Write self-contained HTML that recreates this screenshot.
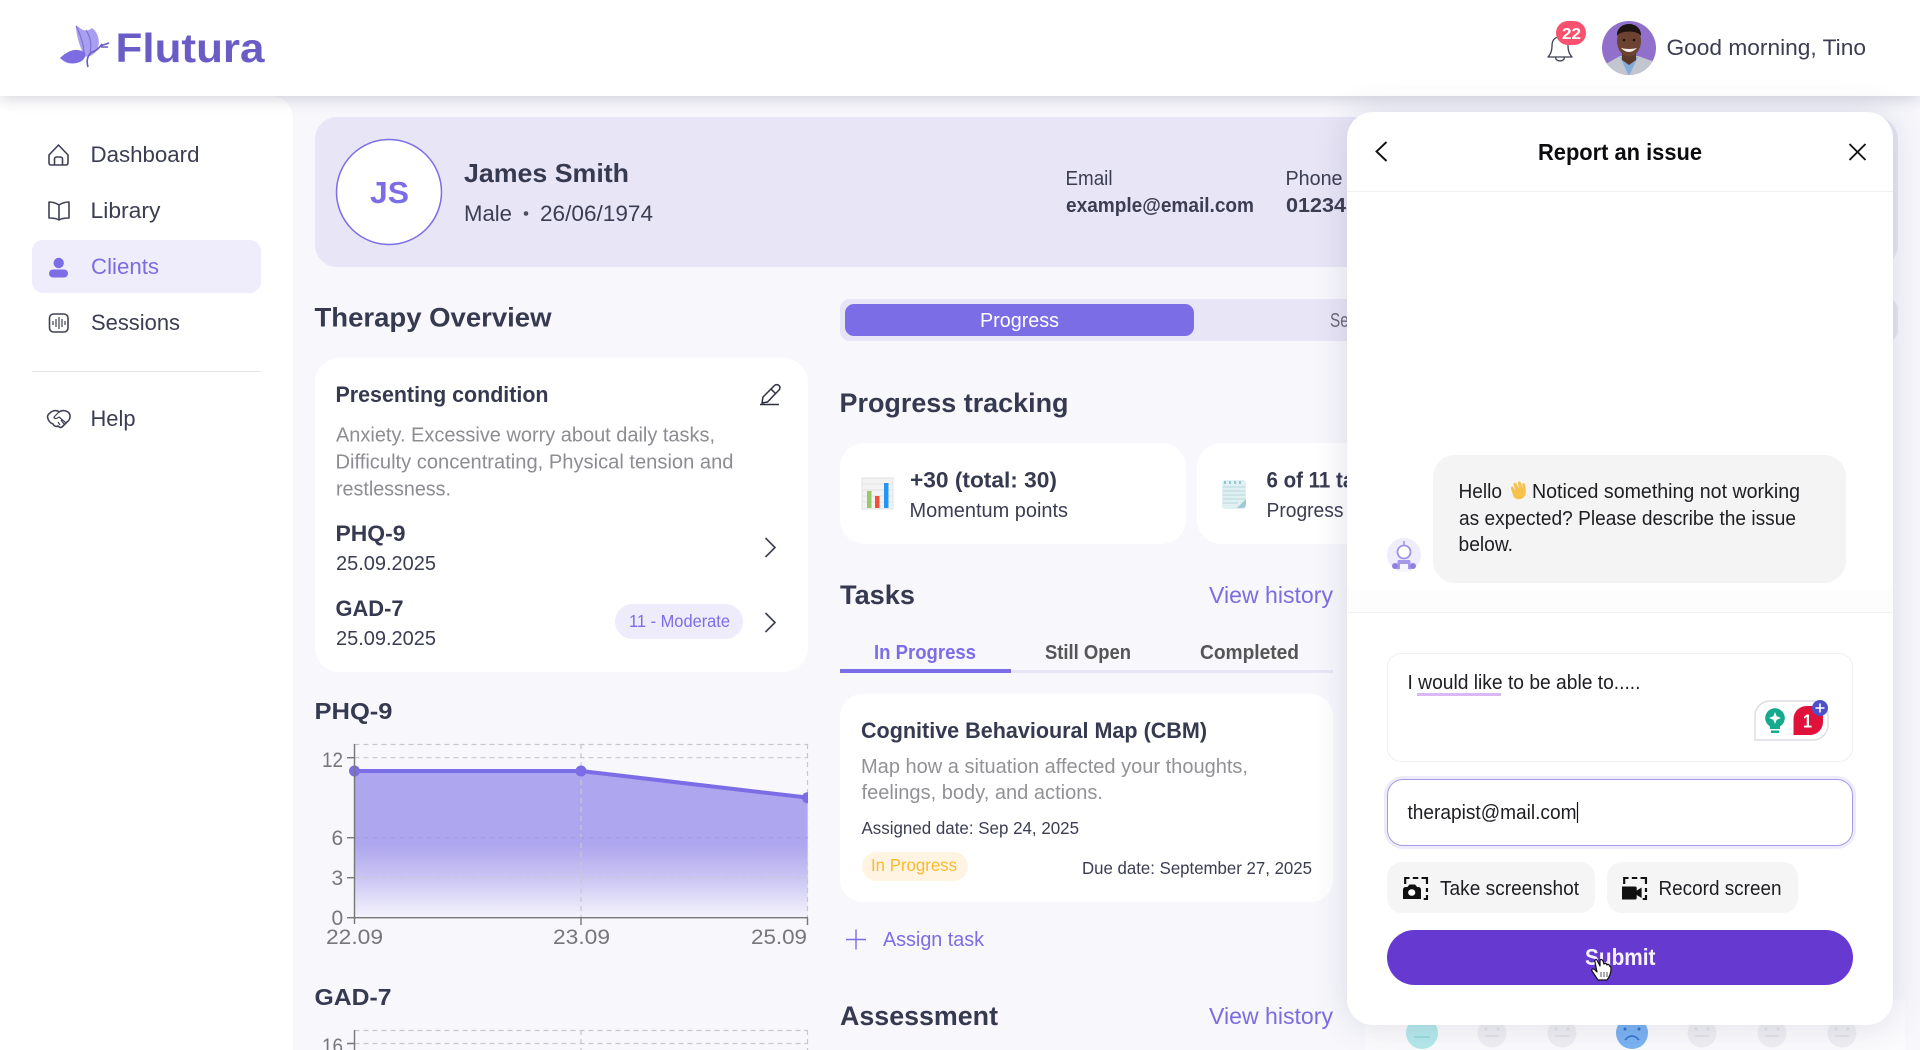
<!DOCTYPE html>
<html lang="en"><head><meta charset="utf-8"><title>Flutura</title>
<style>
html,body{margin:0;padding:0;width:1920px;height:1050px;overflow:hidden;background:#f7f7fc}
#r{position:relative;width:1920px;height:1050px;overflow:hidden;background:#f7f7fc;filter:blur(.35px);font-family:"Liberation Sans",sans-serif}
.b{position:absolute;box-sizing:border-box}
svg{position:absolute;left:0;top:0;overflow:visible}
text{font-family:"Liberation Sans",sans-serif;fill:#3b3d52}
.h{font-weight:700;fill:#363a50}
.g{fill:#8c8c92}
.p{fill:#7b6de0}
</style></head><body><div id="r">
<!-- base surfaces -->
<div class="b" style="left:0;top:96px;width:293px;height:954px;background:#fff;border-top-right-radius:22px"></div>
<div class="b" style="left:32px;top:240px;width:229px;height:53px;background:#efedfb;border-radius:11px"></div>
<div class="b" style="left:32px;top:371px;width:229px;height:1px;background:#e4e4e8"></div>
<div class="b" style="left:315px;top:117px;width:1583px;height:150px;background:#e8e5f6;border-radius:22px"></div>
<div class="b" style="left:840px;top:299px;width:1058px;height:42px;background:#e8e5f6;border-radius:10px"></div>
<div class="b" style="left:845px;top:304px;width:349px;height:32px;background:#7b6de6;border-radius:9px"></div>
<div class="b" style="left:315px;top:358px;width:493px;height:314px;background:#fff;border-radius:24px"></div>
<div class="b" style="left:615px;top:604px;width:128px;height:35px;background:#eeecfb;border-radius:18px"></div>
<div class="b" style="left:840px;top:443px;width:346px;height:101px;background:#fff;border-radius:24px"></div>
<div class="b" style="left:1197px;top:443px;width:346px;height:101px;background:#fff;border-radius:24px"></div>
<div class="b" style="left:840px;top:694px;width:493px;height:208px;background:#fff;border-radius:22px"></div>
<div class="b" style="left:862px;top:852px;width:106px;height:29px;background:#fff4e2;border-radius:15px"></div>
<div class="b" style="left:840px;top:670px;width:493px;height:3px;background:#e8e5f6"></div>
<div class="b" style="left:840px;top:669px;width:171px;height:4px;background:#7b6de6"></div>
<div class="b" style="left:1365px;top:1000px;width:540px;height:50px;background:#fbfbfd"></div>

<svg width="1920" height="1050" viewBox="0 0 1920 1050">
<defs><linearGradient id="ar" x1="0" y1="771" x2="0" y2="918" gradientUnits="userSpaceOnUse">
<stop offset="0" stop-color="#aea6ee"/><stop offset=".5" stop-color="#aea6ee"/><stop offset=".72" stop-color="#c9c4f3"/><stop offset="1" stop-color="#f5f4fc"/></linearGradient></defs>

<!-- sidebar -->
<g fill="none" stroke="#3f4155" stroke-width="1.6" stroke-linejoin="round">
<path d="M49 155L58.5 145 68 155V163a2 2 0 0 1-2 2H51a2 2 0 0 1-2-2Z"/><path d="M54.500 165v-6a2 2 0 0 1 2-2h4a2 2 0 0 1 2 2v6"/>
<path d="M59 205C56 203 52 202 49 202V218C52 218 56 218 59 220 62 218 66 218 69 218V202C66 202 62 203 59 205ZM59 205V220"/>
<rect x="49.500" y="314" width="18.500" height="18" rx="4"/>
<path d="M53 321v4M56 319v8M59 317v12M62 319v8M65 321v4" stroke-width="1.2"/>
<path d="M50 413C53 410 57 410 59 412 62 410 66 410 69 413 71 416 70 420 67 422L62 427C60 428 59 427 58 426 56 427 54 426 53 424 50 423 48 420 47.500 417 47.500 415 48.500 414 50 413Z"/>
<path d="M59 412L54 417C54 419 57 419 59 417L66 423M61 420L64 424M58 422L60 425" stroke-width="1.2"/>
</g>
<circle cx="58.700" cy="263" r="5.200" fill="#7b6de6"/><rect x="49" y="269.500" width="19" height="8" rx="4" fill="#7b6de6"/>
<text x="90.500" y="162" font-size="22" textLength="109" lengthAdjust="spacingAndGlyphs">Dashboard</text>
<text x="90.500" y="218" font-size="22" textLength="70" lengthAdjust="spacingAndGlyphs">Library</text>
<text x="91" y="274" font-size="22" textLength="68" lengthAdjust="spacingAndGlyphs" class="p">Clients</text>
<text x="91" y="330" font-size="22" textLength="89" lengthAdjust="spacingAndGlyphs">Sessions</text>
<text x="90.500" y="426" font-size="22" textLength="45" lengthAdjust="spacingAndGlyphs">Help</text>

<!-- patient card -->
<circle cx="389" cy="192" r="52.500" fill="#fff" stroke="#7b6de6" stroke-width="1.500"/>
<text x="370" y="203" font-size="31" font-weight="700" textLength="39" lengthAdjust="spacingAndGlyphs" style="fill:#7b6de6">JS</text>
<text x="464" y="182" font-size="26" textLength="165" lengthAdjust="spacingAndGlyphs" class="h">James Smith</text>
<text x="464" y="221" font-size="22" textLength="48" lengthAdjust="spacingAndGlyphs">Male</text>
<circle cx="526" cy="213.500" r="2.300" fill="#4a4c60"/>
<text x="540" y="221" font-size="22" textLength="113" lengthAdjust="spacingAndGlyphs">26/06/1974</text>
<text x="1065.500" y="185" font-size="20" textLength="47" lengthAdjust="spacingAndGlyphs">Email</text>
<text x="1066" y="212" font-size="20" font-weight="700" textLength="188" lengthAdjust="spacingAndGlyphs">example@email.com</text>
<text x="1285.500" y="185" font-size="20" textLength="57" lengthAdjust="spacingAndGlyphs">Phone</text>
<text x="1286" y="212" font-size="20" font-weight="700" textLength="108" lengthAdjust="spacingAndGlyphs">012345678</text>

<!-- left column -->
<text x="314.500" y="326.500" font-size="27" textLength="237" lengthAdjust="spacingAndGlyphs" class="h">Therapy Overview</text>
<text x="335.500" y="402" font-size="22" textLength="213" lengthAdjust="spacingAndGlyphs" class="h">Presenting condition</text>
<path d="M763 403l1-6 11.500-11.500a2.800 2.800 0 0 1 4.500 4.500L768.500 402ZM772 389l4.500 4.500M761 404.500H780" fill="none" stroke="#2e3040" stroke-width="1.500" stroke-linejoin="round" transform="translate(-1 0)"/>
<text x="336" y="441.500" font-size="20" textLength="379" lengthAdjust="spacingAndGlyphs" class="g">Anxiety. Excessive worry about daily tasks,</text>
<text x="335.500" y="468.500" font-size="20" textLength="398" lengthAdjust="spacingAndGlyphs" class="g">Difficulty concentrating, Physical tension and</text>
<text x="336" y="495.500" font-size="20" textLength="115" lengthAdjust="spacingAndGlyphs" class="g">restlessness.</text>
<text x="335.500" y="541" font-size="22" textLength="70" lengthAdjust="spacingAndGlyphs" class="h">PHQ-9</text>
<text x="336" y="570" font-size="20" textLength="100" lengthAdjust="spacingAndGlyphs">25.09.2025</text>
<text x="335.500" y="616" font-size="22" textLength="68" lengthAdjust="spacingAndGlyphs" class="h">GAD-7</text>
<text x="336" y="645" font-size="20" textLength="100" lengthAdjust="spacingAndGlyphs">25.09.2025</text>
<text x="629" y="627" font-size="17.500" textLength="101" lengthAdjust="spacingAndGlyphs" style="fill:#7b6de6">11 - Moderate</text>
<path d="M765.500 538L775 547.500 765.500 557M765.500 613L775 622.500 765.500 632" fill="none" stroke="#3b3d52" stroke-width="1.600"/>

<!-- PHQ chart -->
<text x="314.500" y="719" font-size="23" textLength="78" lengthAdjust="spacingAndGlyphs" class="h">PHQ-9</text>
<defs><clipPath id="cc"><rect x="340" y="740" width="468" height="190"/></clipPath></defs>
<path d="M354.500 771H581L807.700 797.700V917.700H354.500Z" fill="url(#ar)"/>
<g stroke="#c7c7d0" stroke-width="1.200" stroke-dasharray="5 4" fill="none">
<path d="M354.500 744.500H808M354.500 757.700H808M354.500 877.700H808M581 744V918M807.500 744V918"/>
<path d="M354.500 837.700H808" stroke="#a49cdf"/>
<path d="M354.500 1030.500H808M354.500 1043.500H808M581 1030V1050M807.500 1030V1050"/>
</g>
<g clip-path="url(#cc)"><path d="M354.500 771H581L808 797.700" fill="none" stroke="#7b6de6" stroke-width="4"/>
<circle cx="354.500" cy="771" r="5.500" fill="#7b6de6"/><circle cx="581" cy="771" r="5.500" fill="#7b6de6"/><circle cx="807.500" cy="797.700" r="5.500" fill="#7b6de6"/></g>
<path d="M354.500 744V924M347 757.700H354.500M347 837.700H354.500M347 877.700H354.500M347 917.700H354.500M354.500 917.700H808M581 918V925M807.500 918V925" fill="none" stroke="#777" stroke-width="1.400"/>
<text x="322" y="767" font-size="21" textLength="21" lengthAdjust="spacingAndGlyphs" style="fill:#777">12</text>
<text x="331.500" y="845" font-size="21" style="fill:#777">6</text>
<text x="331.500" y="885" font-size="21" style="fill:#777">3</text>
<text x="331.500" y="925" font-size="21" style="fill:#777">0</text>
<text x="326" y="944" font-size="21" textLength="57" lengthAdjust="spacingAndGlyphs" style="fill:#777">22.09</text>
<text x="553" y="944" font-size="21" textLength="57" lengthAdjust="spacingAndGlyphs" style="fill:#777">23.09</text>
<text x="751" y="944" font-size="21" textLength="56" lengthAdjust="spacingAndGlyphs" style="fill:#777">25.09</text>
<text x="314.500" y="1005" font-size="23" textLength="77" lengthAdjust="spacingAndGlyphs" class="h">GAD-7</text>
<path d="M354.500 1030V1050M347 1043.500H354.500" fill="none" stroke="#777" stroke-width="1.400"/>
<text x="322" y="1053" font-size="21" textLength="21" lengthAdjust="spacingAndGlyphs" style="fill:#777">16</text>

<!-- right column -->
<text x="980" y="327" font-size="20" textLength="79" lengthAdjust="spacingAndGlyphs" style="fill:#fff">Progress</text>
<text x="1330" y="327" font-size="20" textLength="62" lengthAdjust="spacingAndGlyphs" style="fill:#6b6b75">Sessions</text>
<text x="839.500" y="412" font-size="27" textLength="229" lengthAdjust="spacingAndGlyphs" class="h">Progress tracking</text>
<rect x="862" y="478" width="31" height="31" fill="#f3f3f3" stroke="#dfe3e3"/>
<path d="M862 484H893M862 490H893M862 496H893M862 502H893" stroke="#e2e6e6"/>
<rect x="867" y="491" width="4.500" height="17" fill="#9cc66a"/><rect x="875" y="496" width="4.500" height="12" fill="#ef4f3b"/><rect x="884" y="483" width="4.500" height="25" fill="#2196f3"/>
<text x="910" y="487.500" font-size="22" font-weight="700" textLength="147" lengthAdjust="spacingAndGlyphs" class="h">+30 (total: 30)</text>
<text x="909.500" y="517" font-size="20" textLength="158.500" lengthAdjust="spacingAndGlyphs">Momentum points</text>
<rect x="1222" y="480" width="24" height="29" rx="3" fill="#dff0f2"/>
<path d="M1223 487H1245M1223 491H1245M1223 495H1245M1223 499H1245M1223 503H1238" stroke="#b9d9de"/>
<path d="M1225 481v3M1230 481v3M1235 481v3M1240 481v3" stroke="#7fb7c2" stroke-width="1.500"/>
<path d="M1246 499v5a4 4 0 0 1-4 4h-5Z" fill="#9cc9d2"/>
<text x="1266.500" y="487.500" font-size="22" font-weight="700" textLength="122" lengthAdjust="spacingAndGlyphs" class="h">6 of 11 tasks</text>
<text x="1266.500" y="517" font-size="20" textLength="77" lengthAdjust="spacingAndGlyphs">Progress</text>

<text x="840" y="604" font-size="27" textLength="75" lengthAdjust="spacingAndGlyphs" class="h">Tasks</text>
<text x="1209" y="603" font-size="23" textLength="124" lengthAdjust="spacingAndGlyphs" class="p">View history</text>
<text x="874" y="659" font-size="20" font-weight="700" textLength="102" lengthAdjust="spacingAndGlyphs" style="fill:#7b6de6">In Progress</text>
<text x="1045" y="659" font-size="20" font-weight="700" textLength="86" lengthAdjust="spacingAndGlyphs" style="fill:#555">Still Open</text>
<text x="1200" y="659" font-size="20" font-weight="700" textLength="99" lengthAdjust="spacingAndGlyphs" style="fill:#555">Completed</text>

<text x="861" y="738" font-size="22" textLength="346" lengthAdjust="spacingAndGlyphs" class="h">Cognitive Behavioural Map (CBM)</text>
<text x="861" y="773" font-size="20" textLength="387" lengthAdjust="spacingAndGlyphs" style="fill:#929296">Map how a situation affected your thoughts,</text>
<text x="861.500" y="799" font-size="20" textLength="241.500" lengthAdjust="spacingAndGlyphs" style="fill:#929296">feelings, body, and actions.</text>
<text x="861.500" y="834" font-size="17.500" textLength="217.500" lengthAdjust="spacingAndGlyphs">Assigned date: Sep 24, 2025</text>
<text x="871" y="871" font-size="17.500" textLength="86" lengthAdjust="spacingAndGlyphs" style="fill:#fbb92e">In Progress</text>
<text x="1082" y="874" font-size="17.500" textLength="230" lengthAdjust="spacingAndGlyphs">Due date: September 27, 2025</text>
<path d="M846 939.500H866M856 929.500V949.500" stroke="#7b6de6" stroke-width="1.400"/>
<text x="883" y="946" font-size="20" textLength="101" lengthAdjust="spacingAndGlyphs" style="fill:#7b6de6">Assign task</text>
<text x="840" y="1025" font-size="27" textLength="158" lengthAdjust="spacingAndGlyphs" class="h">Assessment</text>
<text x="1209" y="1024" font-size="23" textLength="124" lengthAdjust="spacingAndGlyphs" class="p">View history</text>

<!-- mood faces under panel -->
<circle cx="1422" cy="1033" r="16" fill="#b3e8ea"/>
<circle cx="1492" cy="1033" r="14.500" fill="#eeeef2"/><circle cx="1562" cy="1033" r="14.500" fill="#eeeef2"/>
<circle cx="1632" cy="1033" r="16" fill="#7ab2f2"/>
<circle cx="1702" cy="1033" r="14.500" fill="#eeeef2"/><circle cx="1772" cy="1033" r="14.500" fill="#eeeef2"/><circle cx="1842" cy="1033" r="14.500" fill="#eeeef2"/>
<path d="M1414 1037H1430" stroke="#8fd6da" stroke-width="1.500"/>
<path d="M1625 1040Q1632 1032 1639 1040" fill="none" stroke="#2f6fc4" stroke-width="1.600"/>
<path d="M1485 1036H1499M1555 1036H1569M1695 1036H1709M1765 1036H1779M1835 1036H1849" stroke="#dcdce2" stroke-width="1.500"/>
<g fill="#dcdce2"><circle cx="1486" cy="1029" r="1.300"/><circle cx="1498" cy="1029" r="1.300"/><circle cx="1556" cy="1029" r="1.300"/><circle cx="1568" cy="1029" r="1.300"/><circle cx="1696" cy="1029" r="1.300"/><circle cx="1708" cy="1029" r="1.300"/><circle cx="1766" cy="1029" r="1.300"/><circle cx="1778" cy="1029" r="1.300"/><circle cx="1836" cy="1029" r="1.300"/><circle cx="1848" cy="1029" r="1.300"/></g>
<g fill="#2f6fc4"><circle cx="1625" cy="1029" r="1.500"/><circle cx="1639" cy="1029" r="1.500"/></g>
</svg>

<!-- header -->
<div class="b" style="left:0;top:0;width:1920px;height:96px;background:#fff;box-shadow:0 3px 14px rgba(50,50,80,.2)"></div>

<!-- panel -->
<div class="b" style="left:1347px;top:112px;width:546px;height:913px;background:#fff;border-radius:26px;box-shadow:0 0 34px rgba(60,60,110,.16)"></div>
<div class="b" style="left:1347px;top:191px;width:546px;height:1px;background:#f0f0f3"></div>
<div class="b" style="left:1347px;top:590px;width:546px;height:22px;background:#fdfdfd"></div>
<div class="b" style="left:1347px;top:612px;width:546px;height:1px;background:#f2f2f4"></div>
<div class="b" style="left:1432.500px;top:455px;width:413px;height:128px;background:#f4f4f5;border-radius:22px"></div>
<div class="b" style="left:1387px;top:653px;width:465.500px;height:109px;background:#fff;border:1px solid #f0f0f3;border-radius:14px"></div>
<div class="b" style="left:1387px;top:779px;width:465.500px;height:67px;background:#fff;border:1.500px solid #a79be8;border-radius:16px;box-shadow:0 0 0 3px #eeebfb"></div>
<div class="b" style="left:1387px;top:862px;width:208px;height:51px;background:#f5f5f6;border-radius:15px"></div>
<div class="b" style="left:1606.500px;top:862px;width:191px;height:51px;background:#f5f5f6;border-radius:15px"></div>
<div class="b" style="left:1387px;top:930px;width:466px;height:55px;background:#6639d0;border-radius:28px"></div>

<svg width="1920" height="1050" viewBox="0 0 1920 1050">
<!-- logo -->
<path d="M84 56C80 46 76 36 76 25 82 30 86 33 92 28 98 32 101 42 97 50 94 55 88 58 84 56Z" fill="#a99ff0"/>
<path d="M60 58C68 50 78 47 85 53 87 60 78 65 68 63 65 62 62 60 60 58Z" fill="#7c6ee2"/>
<path d="M88 67C86 60 88 55 92 52 97 51 100 47 102 44M100 46L109 43M101 47L108 47" fill="none" stroke="#6a5cc7" stroke-width="1.600"/>
<path d="M76 26C80 34 84 44 84 54M86 30C90 36 92 44 90 52" fill="none" stroke="#6a5cc7" stroke-width="1.200" opacity=".7"/>
<text x="115.500" y="62" font-size="41" font-weight="700" textLength="149" lengthAdjust="spacingAndGlyphs" style="fill:#6a5cc7">Flutura</text>
<!-- bell -->
<path d="M1548 57C1551 54 1552 50 1552 46 1552 40 1555 37 1560 37 1565 37 1568 40 1568 46 1568 50 1569 54 1572 57ZM1555.500 57.500C1556 62 1564 62 1564.500 57.500" fill="none" stroke="#3b3d52" stroke-width="1.300" stroke-linejoin="round"/>
<rect x="1556" y="21" width="30" height="24" rx="12" fill="#f9516e"/>
<text x="1562" y="39" font-size="16" font-weight="700" textLength="19" lengthAdjust="spacingAndGlyphs" style="fill:#fff">22</text>
<!-- avatar -->
<defs><clipPath id="av"><circle cx="1629" cy="48" r="27"/></clipPath></defs>
<g clip-path="url(#av)">
<rect x="1600" y="20" width="58" height="56" fill="#9170cc"/>
<path d="M1600 76L1604 65 1620 56H1638L1652 61 1658 76Z" fill="#c2c6cf"/>
<path d="M1620 57L1629 76 1638 57Z" fill="#85acd9"/>
<path d="M1622 50H1636L1636 60 1629 65 1622 60Z" fill="#5b3828"/>
<ellipse cx="1629" cy="41" rx="12" ry="15.500" fill="#6b4330"/>
<path d="M1617 36C1616 20 1642 20 1641 36 1638 30 1620 30 1617 36Z" fill="#1e1310"/>
<path d="M1621 48Q1629 56 1637 48Q1629 50 1621 48Z" fill="#f6f0ea"/>
<circle cx="1624" cy="40" r="1.300" fill="#1a100c"/><circle cx="1634" cy="40" r="1.300" fill="#1a100c"/>
</g>
<text x="1666.500" y="55" font-size="22" textLength="199.500" lengthAdjust="spacingAndGlyphs">Good morning, Tino</text>

<!-- panel header -->
<path d="M1386.500 142L1376.500 151.500 1386.500 161" fill="none" stroke="#111" stroke-width="1.900"/>
<text x="1538" y="160" font-size="23" font-weight="700" textLength="164" lengthAdjust="spacingAndGlyphs" style="fill:#0c0c0f">Report an issue</text>
<path d="M1849.500 144L1865.500 160M1865.500 144L1849.500 160" stroke="#111" stroke-width="1.800"/>

<!-- bubble -->
<text x="1458.500" y="498" font-size="20" textLength="43.500" lengthAdjust="spacingAndGlyphs" style="fill:#1d1d22">Hello</text>
<g transform="translate(1508 481) scale(1.100)"><path d="M3 8C2 5 4 4 5 6L7 9 5 3C5 1 7 1 8 3L10 7 9 1.500C9 0 11 0 12 2L13.500 7 13 3C13 1.500 15 1.500 15.500 3.500 16 7 17 11 15 14 12 18 7 17 5 14Z" fill="#f6c24c"/></g>
<text x="1532" y="498" font-size="20" textLength="268" lengthAdjust="spacingAndGlyphs" style="fill:#1d1d22">Noticed something not working</text>
<text x="1459" y="525" font-size="20" textLength="337" lengthAdjust="spacingAndGlyphs" style="fill:#1d1d22">as expected? Please describe the issue</text>
<text x="1458.500" y="551" font-size="20" textLength="54.500" lengthAdjust="spacingAndGlyphs" style="fill:#1d1d22">below.</text>
<!-- bot -->
<circle cx="1404" cy="555" r="17" fill="#efecfb"/>
<circle cx="1404" cy="552" r="6.500" fill="#fff" stroke="#9e91e6" stroke-width="1.800"/>
<path d="M1404 545.500V541" stroke="#9e91e6" stroke-width="1.500"/>
<path d="M1398 560H1410L1412 569H1396Z" fill="#a598ea"/>
<circle cx="1395" cy="566" r="3" fill="#8f80e0"/><circle cx="1413" cy="566" r="3" fill="#8f80e0"/>
<rect x="1400" y="564" width="8" height="8" fill="#f7f6fe"/>

<!-- textarea -->
<text x="1407.500" y="689" font-size="20" textLength="233" lengthAdjust="spacingAndGlyphs" style="fill:#1d1d22">I would like to be able to.....</text>
<rect x="1417" y="693" width="84" height="3" fill="#d9b8f5"/>
<path d="M1755 740V716A15 15 0 0 1 1770 701H1813A15 15 0 0 1 1828 716V725A15 15 0 0 1 1813 740Z" fill="#fff" stroke="#dcdce4" stroke-width="1.400"/>
<circle cx="1775" cy="718" r="9.800" fill="#15a98d"/>
<path d="M1770 725H1780V729H1770ZM1771 730.500H1779V733H1771Z" fill="#15a98d"/>
<path d="M1775 712L1776.700 716.300 1781 718 1776.700 719.700 1775 724 1773.300 719.700 1769 718 1773.300 716.300Z" fill="#fff"/>
<path d="M1793.500 735V719A13 13 0 0 1 1806.500 706H1823V722A13 13 0 0 1 1810 735Z" fill="#e0123c"/>
<text x="1803" y="727.500" font-size="18" font-weight="700" textLength="9" lengthAdjust="spacingAndGlyphs" style="fill:#fff">1</text>
<circle cx="1820" cy="708" r="8" fill="#4d50c8"/>
<path d="M1815.500 708H1824.500M1820 703.500V712.500" stroke="#fff" stroke-width="1.600"/>

<!-- email -->
<text x="1407.500" y="819" font-size="20" textLength="169" lengthAdjust="spacingAndGlyphs" style="fill:#1d1d22">therapist@mail.com</text>
<path d="M1577.500 802V823" stroke="#111" stroke-width="1.200"/>

<!-- buttons -->
<g transform="translate(6 0) translate(1397 877) scale(1.090 1) translate(-1397 -877)">
<path d="M1399 884V878H1403M1406 878H1411M1414 878H1419V884M1419 888V892M1419 895V899H1416" fill="none" stroke="#111" stroke-width="2"/>
<path d="M1397 889.500A2.500 2.500 0 0 1 1399.500 887H1401L1403 884.500H1408L1410 887H1411A2.500 2.500 0 0 1 1413.500 889.500V899H1397Z" fill="#111"/>
<circle cx="1405" cy="892.500" r="3.300" fill="#fff"/>
</g>
<g transform="translate(28 0) translate(1594 877) scale(1.090 1) translate(-1594 -877)">
<path d="M1596 884V878H1600M1603 878H1608M1611 878H1616V884M1616 888V892M1616 895V899H1613" fill="none" stroke="#111" stroke-width="2"/>
<path d="M1594 886.500H1606A1.500 1.500 0 0 1 1607.500 888V890.500L1612 887.500V898L1607.500 895V898A1.500 1.500 0 0 1 1606 899.500H1594Z" fill="#111"/>
</g>
<text x="1440" y="895" font-size="20" textLength="139" lengthAdjust="spacingAndGlyphs" style="fill:#1d1d22">Take screenshot</text>
<text x="1658.500" y="895" font-size="20" textLength="123" lengthAdjust="spacingAndGlyphs" style="fill:#1d1d22">Record screen</text>

<!-- submit -->
<text x="1585" y="965" font-size="23" font-weight="700" textLength="70.500" lengthAdjust="spacingAndGlyphs" style="fill:#f5f2fd">Submit</text>
<g transform="translate(25 0)">
<path d="M1570 962C1569 960 1571 959 1572 960L1575 966V961C1575 959 1577 959 1578 961L1579 964C1580 963 1581 963 1582 965 1583 964 1584 964 1584.500 966 1585.500 966 1586 967 1586 969 1586 973 1585 976 1582 980H1573C1571 977 1569 974 1567 971 1566 969 1568 968 1570 970L1572 972Z" fill="#fff" stroke="#111" stroke-width="1.200" stroke-linejoin="round"/>
<path d="M1576 972V977M1579 972V977M1582 972V977" stroke="#555" stroke-width="1"/>
</g>
</svg>
</div></body></html>
